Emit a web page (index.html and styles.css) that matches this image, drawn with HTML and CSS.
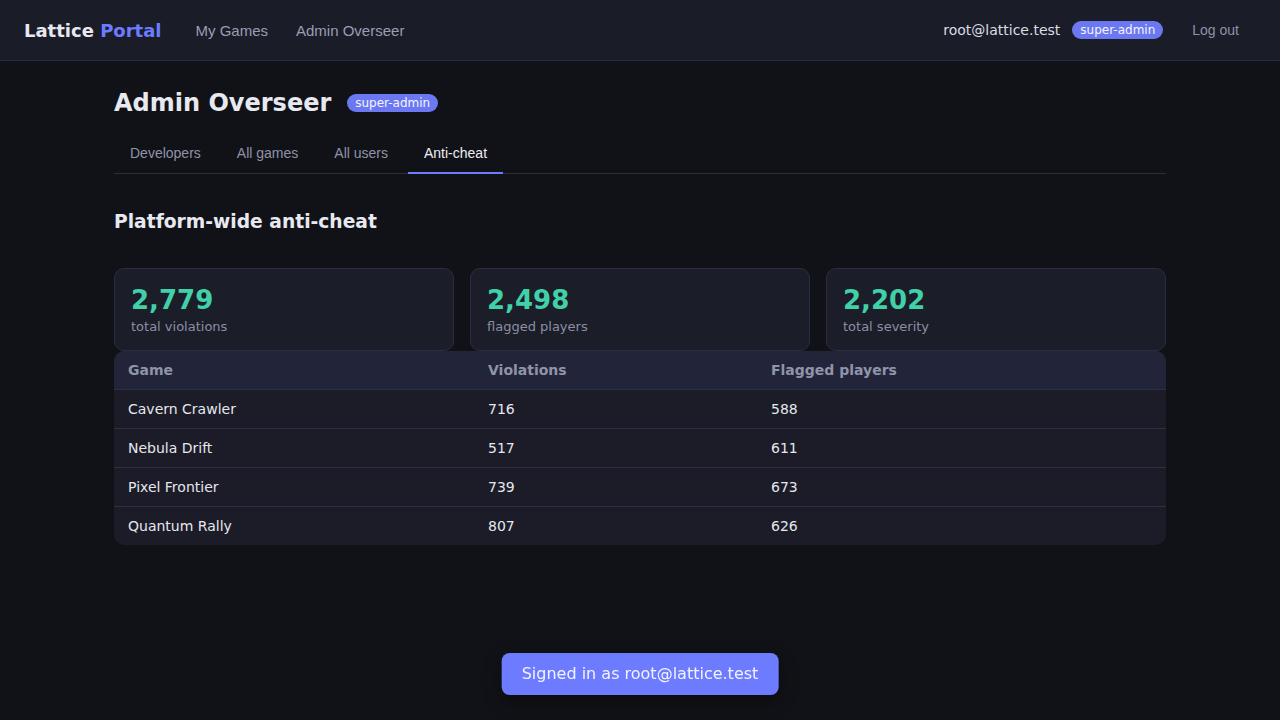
FILE: index.html
```html
<!DOCTYPE html>
<html lang="en">
<head>
<meta charset="utf-8">
<title>Lattice Portal — Admin Overseer</title>
<link rel="stylesheet" href="styles.css">
</head>
<body>
<header class="topbar">
  <div class="brand">Lattice <span class="brand-accent">Portal</span></div>
  <nav class="mainnav">
    <a class="navlink" href="#">My Games</a>
    <a class="navlink" href="#">Admin Overseer</a>
  </nav>
  <div class="userbox">
    <span class="useremail">root@lattice.test</span>
    <span class="badge">super-admin</span>
    <button class="logout">Log out</button>
  </div>
</header>

<main class="page">
  <div class="titlerow">
    <h1 class="title">Admin Overseer</h1>
    <span class="badge">super-admin</span>
  </div>

  <nav class="tabs">
    <a class="tab" href="#">Developers</a>
    <a class="tab" href="#">All games</a>
    <a class="tab" href="#">All users</a>
    <a class="tab tab-active" href="#">Anti-cheat</a>
  </nav>

  <h2 class="section-title">Platform-wide anti-cheat</h2>

  <div class="stats">
    <div class="stat">
      <div class="stat-value">2,779</div>
      <div class="stat-label">total violations</div>
    </div>
    <div class="stat">
      <div class="stat-value">2,498</div>
      <div class="stat-label">flagged players</div>
    </div>
    <div class="stat">
      <div class="stat-value">2,202</div>
      <div class="stat-label">total severity</div>
    </div>
  </div>

  <table class="grid">
    <thead>
      <tr><th class="c1">Game</th><th class="c2">Violations</th><th>Flagged players</th></tr>
    </thead>
    <tbody>
      <tr><td>Cavern Crawler</td><td>716</td><td>588</td></tr>
      <tr><td>Nebula Drift</td><td>517</td><td>611</td></tr>
      <tr><td>Pixel Frontier</td><td>739</td><td>673</td></tr>
      <tr><td>Quantum Rally</td><td>807</td><td>626</td></tr>
    </tbody>
  </table>
</main>

<div class="toast">Signed in as root@lattice.test</div>
</body>
</html>
```

FILE: styles.css
```css
* { box-sizing: border-box; }

html, body {
  margin: 0;
  padding: 0;
  background: #111217;
  color: #e6e7ee;
  font-family: "DejaVu Sans", sans-serif;
}

.topbar {
  height: 61px;
  display: flex;
  align-items: center;
  padding: 0 25px 0 24px;
  background: #1a1c28;
  border-bottom: 1px solid #2a2d3f;
}

.brand {
  font-weight: bold;
  font-size: 18px;
  color: #e8e9f0;
  margin-right: 34px;
}

.brand-accent { color: #6d7cff; }

.mainnav {
  display: flex;
  gap: 28px;
  flex: 1;
}

.navlink {
  font-family: "Liberation Sans", Arial, sans-serif;
  font-size: 15px;
  color: #9a9db2;
  text-decoration: none;
}

.userbox {
  display: flex;
  align-items: center;
  gap: 12px;
}

.useremail {
  font-size: 14px;
  color: #dcdde6;
}

.badge {
  display: inline-block;
  background: #6b78f2;
  color: #f4f5ff;
  font-size: 12px;
  line-height: 18px;
  padding: 0 8px;
  border-radius: 9px;
}

.logout {
  background: transparent;
  border: none;
  font-family: "Liberation Sans", Arial, sans-serif;
  font-size: 14px;
  color: #8f92a7;
  padding: 6px 16px;
  margin-left: 1px;
  cursor: pointer;
}

.page {
  max-width: 1100px;
  margin: 0 auto;
  padding: 0 24px;
}

.titlerow {
  display: flex;
  align-items: center;
  gap: 16px;
  margin-top: 26px;
}

.title {
  margin: 0;
  font-size: 24px;
  line-height: 32px;
  color: #e8e9f0;
}

.tabs {
  display: flex;
  gap: 4px;
  margin-top: 17px;
  border-bottom: 1px solid #2a2d3d;
}

.tab {
  font-family: "Liberation Sans", Arial, sans-serif;
  font-size: 14px;
  line-height: 16px;
  color: #8f92a7;
  text-decoration: none;
  padding: 9px 16px 11px;
  border-bottom: 2px solid transparent;
  margin-bottom: -1px;
}

.tab-active {
  color: #eceef5;
  border-bottom-color: #6d7cff;
}

.section-title {
  margin: 36px 0 0;
  font-size: 18.7px;
  line-height: 24px;
  color: #e8e9f0;
}

.stats {
  display: grid;
  grid-template-columns: repeat(3, 1fr);
  gap: 16px;
  margin-top: 34px;
}

.stat {
  background: #1b1d29;
  border: 1px solid #2b2e41;
  border-radius: 10px;
  padding: 15px 16px 15px;
  height: 83px;
}

.stat-value {
  font-size: 26px;
  font-weight: bold;
  line-height: 32px;
  color: #41d1a9;
}

.stat-label {
  font-size: 13px;
  line-height: 18px;
  margin-top: 2px;
  color: #8b8fa4;
}

.grid {
  width: 100%;
  border-collapse: separate;
  border-spacing: 0;
  background: #1b1c28;
  border-radius: 10px;
  overflow: hidden;
  font-size: 14px;
}

.grid th {
  text-align: left;
  background: #22253a;
  color: #9094a9;
  font-weight: bold;
  height: 39px;
  padding: 0 14px;
  border-bottom: 1px solid #2d3045;
}

.grid th.c1 { width: 360px; }
.grid th.c2 { width: 283px; }

.grid td {
  height: 39px;
  padding: 0 14px;
  color: #e6e7ee;
  border-bottom: 1px solid #2d3045;
}

.grid tbody tr:last-child td { border-bottom: none; height: 38px; }

.toast {
  position: fixed;
  left: 50%;
  bottom: 25px;
  transform: translateX(-50%);
  background: #6d7cff;
  color: #f2f3ff;
  font-size: 16px;
  line-height: 20px;
  padding: 11px 20px;
  border-radius: 8px;
  box-shadow: 0 6px 18px rgba(0,0,0,0.4);
}
```
